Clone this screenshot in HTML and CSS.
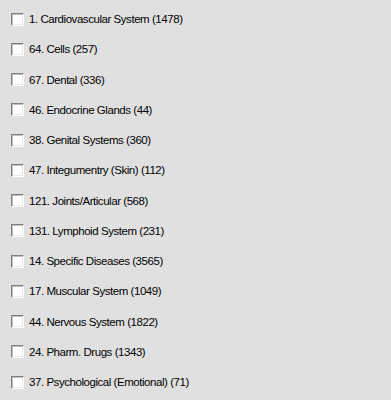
FILE: index.html
```html
<!DOCTYPE html>
<html>
<head>
<meta charset="utf-8">
<link rel="stylesheet" href="styles.css">
</head>
<body>
<ul class="list">
  <li class="item"><span class="box"></span><span class="label">1. Cardiovascular System (1478)</span></li>
  <li class="item"><span class="box"></span><span class="label">64. Cells (257)</span></li>
  <li class="item"><span class="box"></span><span class="label">67. Dental (336)</span></li>
  <li class="item"><span class="box"></span><span class="label">46. Endocrine Glands (44)</span></li>
  <li class="item"><span class="box"></span><span class="label">38. Genital Systems (360)</span></li>
  <li class="item"><span class="box"></span><span class="label">47. Integumentry (Skin) (112)</span></li>
  <li class="item"><span class="box"></span><span class="label">121. Joints/Articular (568)</span></li>
  <li class="item"><span class="box"></span><span class="label">131. Lymphoid System (231)</span></li>
  <li class="item"><span class="box"></span><span class="label">14. Specific Diseases (3565)</span></li>
  <li class="item"><span class="box"></span><span class="label">17. Muscular System (1049)</span></li>
  <li class="item"><span class="box"></span><span class="label">44. Nervous System (1822)</span></li>
  <li class="item"><span class="box"></span><span class="label">24. Pharm. Drugs (1343)</span></li>
  <li class="item"><span class="box"></span><span class="label">37. Psychological (Emotional) (71)</span></li>
</ul>
</body>
</html>
```
FILE: styles.css
```css
html, body {
  margin: 0;
  padding: 0;
  background: #e0e0e0;
  height: 100%;
  overflow: hidden;
}
.list {
  list-style: none;
  margin: 0;
  padding: 4px 0 0 11px;
  font-family: "Liberation Sans", Arial, sans-serif;
  font-size: 11.5px;
  letter-spacing: -0.45px;
  color: #000;
}
.item {
  display: flex;
  align-items: center;
  height: 30.25px;
}
.box {
  box-sizing: border-box;
  width: 13px;
  height: 13px;
  background: #fff;
  border-top: 1px solid #808080;
  border-left: 1px solid #808080;
  border-bottom: 1px solid #fff;
  border-right: 1px solid #fff;
  box-shadow: inset 1px 1px 0 #c0c0c0, inset -1px -1px 0 #e8e8e8;
  margin-right: 5px;
  flex: none;
}
.label {
  white-space: nowrap;
}
```
